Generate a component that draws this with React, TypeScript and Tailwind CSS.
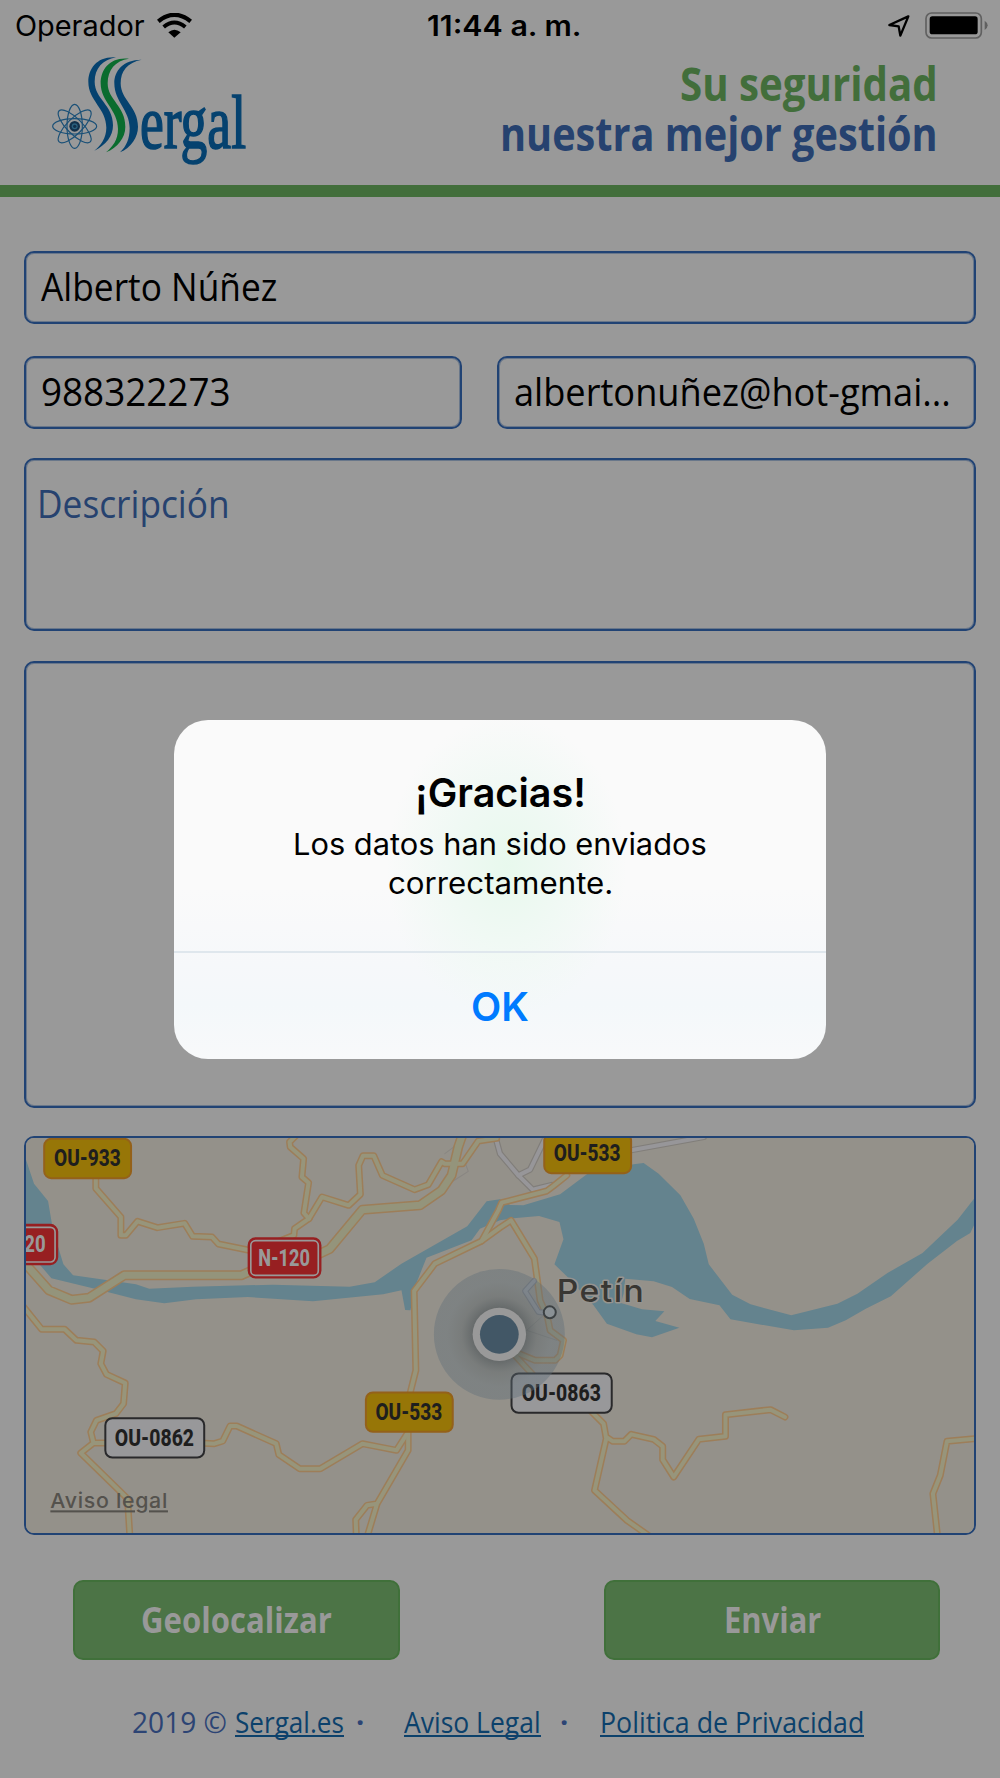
import { useLayoutEffect, useRef, useState } from 'react';

interface FitTextProps {
  width: number;
  className?: string;
  children: string;
}

// Single line of text stretched or squeezed to a given width
const FitText = ({ width, className = '', children }: FitTextProps) => {
  const ref = useRef<HTMLSpanElement>(null);
  const [scale, setScale] = useState(1);

  useLayoutEffect(() => {
    if (ref.current) setScale(width / ref.current.offsetWidth);
  }, [width, children]);

  return (
    <span className="inline-block whitespace-nowrap text-left" style={{ width }}>
      <span
        ref={ref}
        className={`inline-block origin-left ${className}`}
        style={{ transform: `scaleX(${scale})` }}
      >
        {children}
      </span>
    </span>
  );
};

const WifiIcon = () => (
  <svg className="w-[35px] h-[25px]" viewBox="0 0 105 75" fill="none" stroke="#000">
    <path d="M4 25 Q52 -14 101 25" strokeWidth="13" />
    <path d="M20 42 Q52 15 85 42" strokeWidth="12" />
    <path d="M34 58 Q52 43 71 58 L52 74Z" fill="#000" stroke="none" />
  </svg>
);

const LocationIcon = () => (
  <svg className="w-[24px] h-[24px]" viewBox="0 0 72 72" fill="none" stroke="#000" strokeWidth="7" strokeLinejoin="round">
    <path d="M64 7 L7 33 L35 37 L40 65 Z" />
  </svg>
);

const BatteryIcon = () => (
  <svg className="w-[63px] h-[27px]" viewBox="0 0 189 81">
    <rect x="3" y="3" width="166" height="75" rx="17" fill="none" stroke="#606060" strokeWidth="5" />
    <rect x="14" y="13" width="144" height="54" rx="8" fill="#000" />
    <path d="M179 26 Q188 32 188 40 Q188 48 179 54Z" fill="#606060" />
  </svg>
);

const Logo = () => (
  <svg className="w-[200px] h-[114px]" viewBox="150 165 600 342">
    <g fill="none" stroke="#1a5077" strokeWidth="3.5">
      <ellipse cx="224" cy="379" rx="66" ry="23" />
      <ellipse cx="224" cy="379" rx="66" ry="23" transform="rotate(45 224 379)" />
      <ellipse cx="224" cy="379" rx="66" ry="23" transform="rotate(90 224 379)" />
      <ellipse cx="224" cy="379" rx="66" ry="23" transform="rotate(135 224 379)" />
    </g>
    <circle cx="224" cy="379" r="16" fill="#12304b" />
    <circle cx="224" cy="379" r="9" fill="#2a5f7d" />
    <circle cx="224" cy="379" r="5" fill="#12304b" />
    <path
      fill="#05426f"
      d="M348 172 C292 168 265 205 265 245 C265 302 319 325 319 383 C319 415 302 436 283 452 C318 436 339 408 339 376 C339 314 284 297 284 245 C284 205 308 179 348 172Z"
    />
    <path
      fill="#0a6c2e"
      d="M387 176 C330 170 302 208 302 250 C302 305 354 330 354 387 C354 420 338 440 318 457 C352 443 376 414 376 380 C376 318 323 300 323 250 C323 210 345 182 387 176Z"
    />
    <path
      fill="#05426f"
      d="M425 179 C368 180 343 212 343 250 C343 305 389 330 389 385 C389 418 378 440 360 457 C393 443 414 412 414 380 C414 320 362 300 362 250 C362 212 382 188 425 179Z"
    />
    <text
      x="420"
      y="443"
      textLength="318"
      lengthAdjust="spacingAndGlyphs"
      fontFamily="Liberation Serif, serif"
      fontSize="226"
      fill="#05426f"
      stroke="#05426f"
      strokeWidth="5"
    >
      ergal
    </text>
  </svg>
);

const WATER =
  'M81 118 L105 190 L147 242 L162 330 L193 432 L222 465 L410 492 L450 505 L580 499 L820 493 L1050 499 L1125 486 L1205 430 L1402 318 L1460 243 L1500 237 L1530 254 L1570 255 L1680 222 L1765 158 L1900 132 L1930 128 L1975 160 L2040 225 L2080 295 L2110 370 L2125 432 L2195 523 L2250 552 L2372 585 L2510 550 L2570 520 L2660 458 L2765 398 L2870 298 L2919 235 V315 L2908 338 L2868 362 L2780 430 L2670 528 L2595 565 L2535 600 L2482 622 L2380 630 L2190 597 L2157 555 L2068 536 L2015 500 L1960 483 L1875 475 L1870 520 L1862 548 L1925 567 L1992 573 L1965 602 L2037 622 L1955 651 L1908 642 L1820 610 L1780 555 L1700 468 L1663 432 L1690 357 L1678 305 L1617 287 L1540 294 L1500 300 L1440 325 L1415 360 L1280 412 L1245 500 L1232 570 L1216 569 L1205 510 L1150 522 L940 543 L745 530 L590 537 L495 549 L410 537 L290 506 L157 474 L120 430 L81 340Z';

const ROADS = [
  'M290 170 V204 L365 290 V345 H380 L415 303 L474 322 L556 309 L580 348 L638 350 L657 371 L760 392',
  'M890 45 L870 65 L872 80 L912 115 L907 170 L927 187 L913 278 L928 295 L885 325 L883 345 L840 362',
  'M928 295 L967 230 L1047 255 L1082 222 L1077 135 L1090 106 H1122 L1148 165 L1244 208 L1285 193 L1325 124 L1335 130 H1388 L1435 62 L1490 54',
  'M1700 165 L1660 197 L1640 212 L1505 247 L1495 270 L1445 362 L1305 430 L1243 512 L1248 750 L1228 830',
  'M1225 930 V990 L1132 1150 L1102 1250 M1132 1150 L1102 1155 L1068 1198 L1070 1250',
  'M1445 362 L1500 322 L1533 300 L1603 415 L1620 540 L1642 590 L1650 630 L1690 660 L1680 705 L1665 720 H1605 L1545 695 M1540 700 L1600 765',
  'M1770 870 L1810 910 L1818 955 L1783 1110 L1880 1200 L1945 1246 M1818 950 L1838 963 H1872 L1893 942 L1960 957 L1987 978 V1018 L2020 1070 L2095 957 L2175 948 V883 L2310 868 L2353 890',
  'M2940 953 L2838 963 L2818 1065 L2796 1120 L2810 1250',
  'M70 555 L128 627 H197 L232 660 L285 665 L312 692 L305 730 L322 762 L378 788 L373 850 L350 880 L292 900 L275 935 L283 968 L245 998 L385 1135 L392 1250 M283 968 H330',
  'M600 968 L645 970 L670 962 L692 917 H712 L830 970 L838 1003 L900 1045 H962 L1088 970 L1190 990 L1222 940',
];

const HIGHWAY =
  'M70 420 L150 510 L217 538 L270 532 L375 465 H725 L770 445 M950 405 L990 386 L1088 268 L1260 255 L1325 210 L1355 165 L1375 80 L1387 45';

const STREETS = ['M1485 45 L1500 100 L1555 165 L1598 208 L1655 194', 'M1555 165 L1590 148 L1635 55', 'M1880 92 L2110 50'];

interface Shield {
  label: string;
  kind: 'yellow' | 'white' | 'red';
  x: number;
  y: number;
  width: number;
  textX: number;
  textWidth: number;
}

const SHIELDS: Shield[] = [
  { label: 'OU-933', kind: 'yellow', x: 133, y: 54, width: 265, textX: 165, textWidth: 200 },
  { label: 'OU-533', kind: 'yellow', x: 1630, y: 39, width: 265, textX: 1661, textWidth: 200 },
  { label: 'OU-533', kind: 'yellow', x: 1096, y: 815, width: 265, textX: 1127, textWidth: 200 },
  { label: 'OU-0862', kind: 'white', x: 316, y: 892, width: 301, textX: 347, textWidth: 237 },
  { label: 'OU-0863', kind: 'white', x: 1532, y: 758, width: 305, textX: 1565, textWidth: 237 },
  { label: 'N-120', kind: 'red', x: 745, y: 352, width: 220, textX: 776, textWidth: 155 },
  { label: '20', kind: 'red', x: -43, y: 312, width: 220, textX: 76, textWidth: 64 },
];

const SHIELD_COLORS = {
  yellow: { fill: '#977607', stroke: '#94611a', text: '#1e1e1e' },
  white: { fill: '#98989a', stroke: '#29292b', text: '#1e1e1e' },
  red: { fill: '#971f21', stroke: '#971f21', text: '#999999' },
};

const RoadShield = ({ label, kind, x, y, width, textX, textWidth }: Shield) => {
  const color = SHIELD_COLORS[kind];
  return (
    <g>
      <rect x={x + 2.5} y={y + 1.5} width={width - 5} height="118" rx="21" fill={color.fill} stroke={color.stroke} strokeWidth="6" />
      {kind === 'red' && (
        <rect x={x + 9} y={y + 9} width={width - 18} height="104" rx="14" fill="none" stroke="#999999" strokeWidth="5" />
      )}
      <text
        x={textX}
        y={y + 84}
        textLength={textWidth}
        lengthAdjust="spacingAndGlyphs"
        fontFamily="Roboto, sans-serif"
        fontWeight="800"
        fontSize="71"
        fill={color.text}
      >
        {label}
      </text>
    </g>
  );
};

const MapView = () => (
  <svg className="block w-full h-full" viewBox="81 53 2838 1185" preserveAspectRatio="none">
    <defs>
      <radialGradient id="pulse">
        <stop offset="0.38" stopColor="#4a5256" stopOpacity="0.66" />
        <stop offset="0.58" stopColor="#566168" stopOpacity="0.43" />
        <stop offset="0.8" stopColor="#5e6d78" stopOpacity="0.4" />
        <stop offset="1" stopColor="#5e6d78" stopOpacity="0.4" />
      </radialGradient>
    </defs>
    <rect x="81" y="51" width="2838" height="1190" fill="#94918a" />
    <path d={WATER} fill="#64838e" />
    <g fill="none" strokeLinejoin="round" strokeLinecap="round">
      <path d="M1335 100 L1375 70 M1395 125 L1405 153 L1360 182" stroke="#898682" strokeWidth="3" />
      {STREETS.map((d) => (
        <path key={d} d={d} stroke="#817e7a" strokeWidth="19" />
      ))}
      {STREETS.map((d) => (
        <path key={d} d={d} stroke="#979699" strokeWidth="12" />
      ))}
      {ROADS.map((d) => (
        <path key={d} d={d} stroke="#9d7e59" strokeWidth="21" />
      ))}
      <path d={HIGHWAY} stroke="#9d7e59" strokeWidth="30" />
      {ROADS.map((d) => (
        <path key={d} d={d} stroke="#97957b" strokeWidth="12" />
      ))}
      <path d={HIGHWAY} stroke="#94947b" strokeWidth="21" />
      <path d="M1602 482 L1575 512 L1615 575 L1640 578" stroke="#7b7c80" strokeWidth="18" />
      <path d="M1602 482 L1575 512 L1615 575 L1640 578" stroke="#939599" strokeWidth="11" />
      <path d="M1580 630 L1630 585 M1580 630 L1670 660" stroke="#807e7a" strokeWidth="2" />
    </g>
    {SHIELDS.map((shield) => (
      <RoadShield key={`${shield.label}-${shield.x}`} {...shield} />
    ))}
    <circle cx="1498" cy="642" r="196" fill="url(#pulse)" />
    <circle cx="1649" cy="576" r="18" fill="#8a9195" stroke="#3c4143" strokeWidth="6" />
    <circle cx="1498" cy="642" r="80" fill="#999999" />
    <circle cx="1498" cy="642" r="58" fill="#425766" />
    <text
      x="1670"
      y="544"
      textLength="265"
      lengthAdjust="spacingAndGlyphs"
      letterSpacing="4"
      fontFamily="Inter, sans-serif"
      fontWeight="500"
      fontSize="94"
      fill="#393733"
      stroke="#96948f"
      strokeWidth="9"
      strokeLinejoin="round"
      paintOrder="stroke"
    >
      Petín
    </text>
    <text
      x="154"
      y="1164"
      textLength="352"
      lengthAdjust="spacingAndGlyphs"
      letterSpacing="2"
      fontFamily="Inter, sans-serif"
      fontWeight="500"
      fontSize="62"
      fill="#54524d"
      textDecoration="underline"
    >
      Aviso legal
    </text>
  </svg>
);

const StatusBar = () => (
  <div className="grid grid-cols-[412px_154px_1fr] items-center h-[51px] pl-[15px] pr-3 font-[Inter,sans-serif] text-[28px] leading-[34px] text-black">
    <div className="flex items-center gap-3">
      <FitText width={130}>Operador</FitText>
      <WifiIcon />
    </div>
    <FitText width={155} className="font-semibold">
      11:44 a. m.
    </FitText>
    <div className="flex items-center justify-end gap-[14px]">
      <LocationIcon />
      <BatteryIcon />
    </div>
  </div>
);

const Header = () => (
  <header className="flex justify-between h-[134px] pl-[50px] pr-[62px] pt-1">
    <Logo />
    <div className="flex flex-col items-end pt-[4px] text-[46px] leading-[49.5px] font-bold">
      <FitText width={258} className="text-[#426e3b]">
        Su seguridad
      </FitText>
      <FitText width={438} className="text-[#26426f]">
        nuestra mejor gestión
      </FitText>
    </div>
  </header>
);

const Dialog = () => (
  <div className="absolute left-[174px] top-[720px] flex flex-col w-[652px] h-[339px] rounded-[34px] overflow-hidden bg-[radial-gradient(ellipse_120px_150px_at_51%_43%,#e8f9ed_0%,#f0f9f4_50%,transparent_100%),linear-gradient(#fafafa_50%,#f6f8fa_72%,#f4f8fa_84%,#f8f9fa_100%)] font-[Inter,sans-serif] text-center text-black">
    <div className="h-[231px] pt-12">
      <h1 className="text-[40px] leading-[50px] font-semibold">
        <FitText width={171}>¡Gracias!</FitText>
      </h1>
      <p className="text-[30px] leading-[39px] pt-[7px]">
        <FitText width={414}>Los datos han sido enviados</FitText>
        <br />
        <FitText width={225}>correctamente.</FitText>
      </p>
    </div>
    <button className="flex-1 pt-0.5 border-t-2 border-[#dfe7ed] text-[40px] leading-[50px] font-semibold text-[#007bff]">
      <FitText width={58}>OK</FitText>
    </button>
  </div>
);

const App = () => {
  return (
    <div className="relative w-[1000px] h-[1778px] overflow-hidden bg-[#999999] font-['Open_Sans',sans-serif]">
      <StatusBar />
      <Header />
      <div className="h-3 mb-px bg-[#426e3b]" />

      <main className="px-6 pt-[53px]">
        <div className="h-[73px] flex items-center pl-[15px] pb-0.5 border-2 border-[#214374] shadow-[inset_0_0_0_1px_#21437466] rounded-[10px] text-[38px] text-black">
          <FitText width={236}>Alberto Núñez</FitText>
        </div>
        <div className="flex gap-[35px] mt-8 text-[38px] text-black">
          <div className="w-[438px] h-[73px] flex items-center pl-[15px] pb-[3px] border-2 border-[#214374] shadow-[inset_0_0_0_1px_#21437466] rounded-[10px]">
            <FitText width={190}>988322273</FitText>
          </div>
          <div className="flex-1 h-[73px] flex items-center pl-[15px] pb-[3px] border-2 border-[#214374] shadow-[inset_0_0_0_1px_#21437466] rounded-[10px]">
            <FitText width={437}>albertonuñez@hot-gmai...</FitText>
          </div>
        </div>
        <div className="h-[173px] mt-[29px] pl-[11px] pt-[15px] border-2 border-[#214374] shadow-[inset_0_0_0_1px_#21437466] rounded-[10px] text-[38px] text-[#26426f]">
          <FitText width={193}>Descripción</FitText>
        </div>
        <div className="h-[447px] mt-[30px] border-2 border-[#214374] shadow-[inset_0_0_0_1px_#21437466] rounded-[10px]" />
        <div className="h-[399px] mt-7 border-2 border-[#214374] rounded-[10px] overflow-hidden">
          <MapView />
        </div>
      </main>

      <div className="flex justify-between mt-[45px] pl-[73px] pr-[60px] text-[36px] leading-[50px] font-bold text-[#999999]">
        <button className="w-[327px] h-20 pb-px bg-[#4c7446] border-2 border-[#40703a] rounded-[10px]">
          <FitText width={191}>Geolocalizar</FitText>
        </button>
        <button className="w-[336px] h-20 pb-px bg-[#4c7446] border-2 border-[#40703a] rounded-[10px]">
          <FitText width={97}>Enviar</FitText>
        </button>
      </div>

      <footer className="flex pl-[132px] pt-[42px] text-[29px] leading-10 text-[#2c4474]">
        <FitText width={95}>2019 ©</FitText>
        <a className="ml-2 h-[35px] border-b-2 border-[#0c416b] text-[#0c416b]">
          <FitText width={109}>Sergal.es</FitText>
        </a>
        <span className="w-[60px] pl-3 font-bold">·</span>
        <a className="h-[35px] border-b-2 border-[#0c416b] text-[#0c416b]">
          <FitText width={137}>Aviso Legal</FitText>
        </a>
        <span className="w-[59px] pl-[19px] font-bold">·</span>
        <a className="h-[35px] border-b-2 border-[#0c416b] text-[#0c416b]">
          <FitText width={264}>Politica de Privacidad</FitText>
        </a>
      </footer>

      <Dialog />
    </div>
  );
};

export default App;
